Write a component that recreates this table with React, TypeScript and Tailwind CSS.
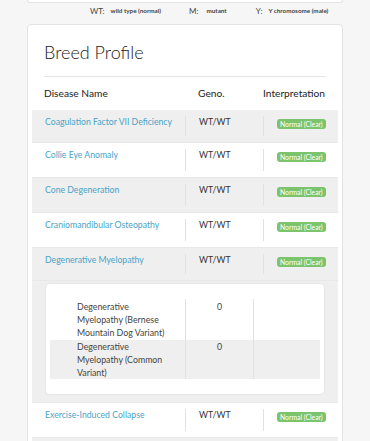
import React from "react";

const rows1 = [
  "Coagulation Factor VII Deficiency",
  "Collie Eye Anomaly",
  "Cone Degeneration",
  "Craniomandibular Osteopathy",
  "Degenerative Myelopathy",
];

function Badge() {
  return (
    <span className="block w-fit whitespace-nowrap rounded-[3px] bg-[#7cc46c] px-[3px] text-[6.8px] leading-[10px] text-white">
      Normal (Clear)
    </span>
  );
}

function Row({ name, gray, h }: { name: string; gray: boolean; h: string }) {
  return (
    <div className={`grid grid-cols-[153px_78px_77px] ${h} ${gray ? "bg-[#efefef]" : "bg-white"} border-b border-[#e8e8e8]`}>
      <div className="whitespace-nowrap pl-[13px] pt-[6px] text-[8.7px] leading-[12px] text-[#4aa3c6]">{name}</div>
      <div className="flex">
        <div className="my-[6px] border-l border-[#e2e2e2]" />
        <div className="pl-[13px] pt-[6px] text-[8.7px] leading-[12px] text-[#333]">WT/WT</div>
      </div>
      <div className="flex">
        <div className="my-[6px] border-l border-[#e2e2e2]" />
        <div className="pl-[13px] pt-[9px]">
          <Badge />
        </div>
      </div>
    </div>
  );
}

export default function App() {
  return (
    <div className="h-[441px] overflow-hidden bg-[#f6f6f6] px-[27px] font-['Lato','Open_Sans',sans-serif]">
      <div className="h-[3px] rounded-b-[3px] border border-t-0 border-[#e3e3e3] bg-white" />
      <div className="flex h-[16px] items-center whitespace-nowrap text-[#444]">
        <span className="ml-[63px] text-[8px]">WT:</span>
        <span className="ml-[6px] text-[6.3px] font-bold">wild type (normal)</span>
        <span className="ml-[28px] text-[8px]">M:</span>
        <span className="ml-[8px] text-[6.3px] font-bold">mutant</span>
        <span className="ml-[29px] text-[8px]">Y:</span>
        <span className="ml-[6px] text-[6.3px] font-bold">Y chromosome (male)</span>
      </div>
      <div className="mt-[5px] rounded-[4px] border border-[#e3e3e3] bg-white px-[16px] pt-[14px]">
        <h1 className="text-[18px] font-light leading-[26px] text-[#222]">Breed Profile</h1>
        <div className="mt-[11px] border-t border-[#e6e6e6]" />
        <div className="mx-[-12px] grid h-[33px] grid-cols-[153px_78px_77px] items-center text-[10.2px] text-[#222]">
          <div className="pl-[12px]">Disease Name</div>
          <div className="pl-[13px]">Geno.</div>
          <div className="pl-0">Interpretation</div>
        </div>
        <div className="mx-[-12px]">
          {rows1.map((n, i) => (
            <Row key={n} name={n} gray={i % 2 === 0} h={i === 0 || i === 4 ? "h-[33px]" : "h-[35px]"} />
          ))}
          <div className="border-b border-[#e8e8e8] bg-[#efefef] px-[14px] pt-[3px] pb-[8px]">
            <div className="rounded-[4px] bg-white px-[4px] pt-[15px] pb-[15px] shadow-[0_0_2px_rgba(0,0,0,0.12)]">
              <div className="grid grid-cols-[135px_68px_68px] text-[8.8px] leading-[13px] text-[#444]">
                <div className="pl-[27px] pr-[20px] pt-[1px] pb-[1px]">Degenerative Myelopathy (Bernese Mountain Dog Variant)</div>
                <div className="border-l border-[#e2e2e2] pt-[1px] text-center">0</div>
                <div className="border-l border-[#e2e2e2]" />
              </div>
              <div className="grid grid-cols-[135px_68px_68px] bg-[#efefef] text-[8.8px] leading-[13px] text-[#444]">
                <div className="pl-[27px] pr-[20px]">Degenerative Myelopathy (Common Variant)</div>
                <div className="border-l border-[#e2e2e2] text-center">0</div>
                <div className="border-l border-[#e2e2e2]" />
              </div>
            </div>
          </div>
          <Row name="Exercise-Induced Collapse" gray={false} h="h-[35px]" />
          <div className="h-[10px] bg-[#efefef]" />
        </div>
      </div>
    </div>
  );
}
